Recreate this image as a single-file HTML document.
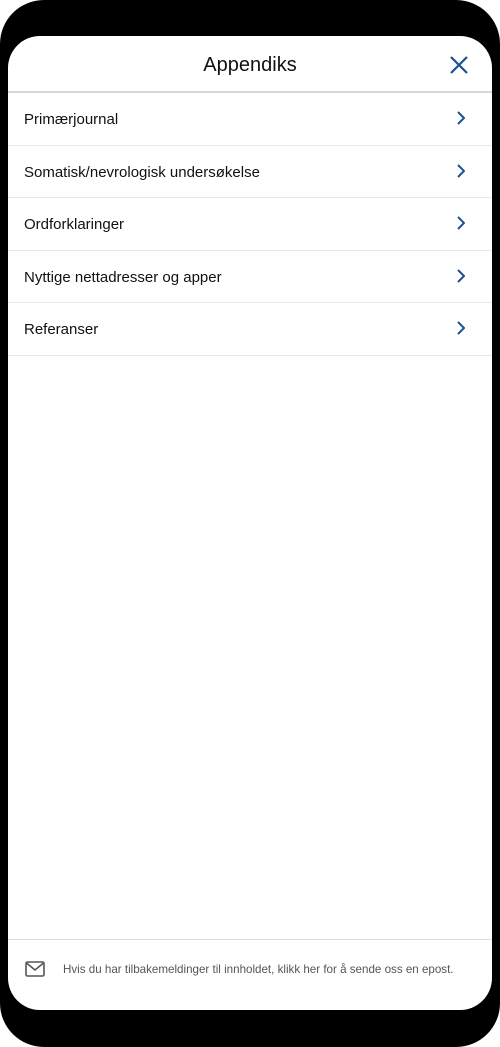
<!DOCTYPE html>
<html><head><style>
body{margin:0;width:500px;height:1047px;background:#fff;font-family:"Liberation Sans",sans-serif;overflow:hidden}
.ph{position:absolute;left:0;top:0;width:500px;height:1047px;background:#000;border-radius:44px}
.card{position:absolute;left:8px;top:36px;width:484px;height:974px;background:#fff;border-radius:32px;overflow:hidden}
.hdr{height:55px;border-bottom:2px solid #d6d6d6;text-align:center;line-height:58px;font-size:20px;color:#111;position:relative}
.x{position:absolute;right:24px;top:20px}
.row{height:49.5px;padding-top:2px;border-bottom:1px solid #e8e8e8;position:relative;font-size:15px;color:#111;line-height:50px;padding-left:16px}
.row svg{position:absolute;right:27px;top:18px}
.ft{position:absolute;left:0;right:0;top:903px;border-top:1px solid #ddd;height:70px}
.ft span{position:absolute;left:55px;top:23px;font-size:11.6px;color:#555}
.ft svg{position:absolute;left:17px;top:21px}
</style></head><body>
<div class="ph"></div>
<div class="card">
<div class="hdr">Appendiks<svg class="x" width="18" height="18" viewBox="0 0 18 18"><path d="M1 1L17 17M17 1L1 17" stroke="#1d4f91" stroke-width="2.2"/></svg></div>
<div class="row">Primærjournal<svg width="8" height="14" viewBox="0 0 8 14"><path d="M1 1L7 7L1 13" stroke="#1d4f91" stroke-width="2" fill="none"/></svg></div>
<div class="row">Somatisk/nevrologisk undersøkelse<svg width="8" height="14" viewBox="0 0 8 14"><path d="M1 1L7 7L1 13" stroke="#1d4f91" stroke-width="2" fill="none"/></svg></div>
<div class="row">Ordforklaringer<svg width="8" height="14" viewBox="0 0 8 14"><path d="M1 1L7 7L1 13" stroke="#1d4f91" stroke-width="2" fill="none"/></svg></div>
<div class="row">Nyttige nettadresser og apper<svg width="8" height="14" viewBox="0 0 8 14"><path d="M1 1L7 7L1 13" stroke="#1d4f91" stroke-width="2" fill="none"/></svg></div>
<div class="row">Referanser<svg width="8" height="14" viewBox="0 0 8 14"><path d="M1 1L7 7L1 13" stroke="#1d4f91" stroke-width="2" fill="none"/></svg></div>
<div class="ft"><svg width="20" height="16" viewBox="0 0 20 16"><rect x="1" y="1" width="18" height="14" rx="1.5" fill="none" stroke="#555" stroke-width="1.6"/><path d="M1.5 2L10 9L18.5 2" fill="none" stroke="#555" stroke-width="1.6"/></svg><span>Hvis du har tilbakemeldinger til innholdet, klikk her for å sende oss en epost.</span></div>
</div>
</body></html>
